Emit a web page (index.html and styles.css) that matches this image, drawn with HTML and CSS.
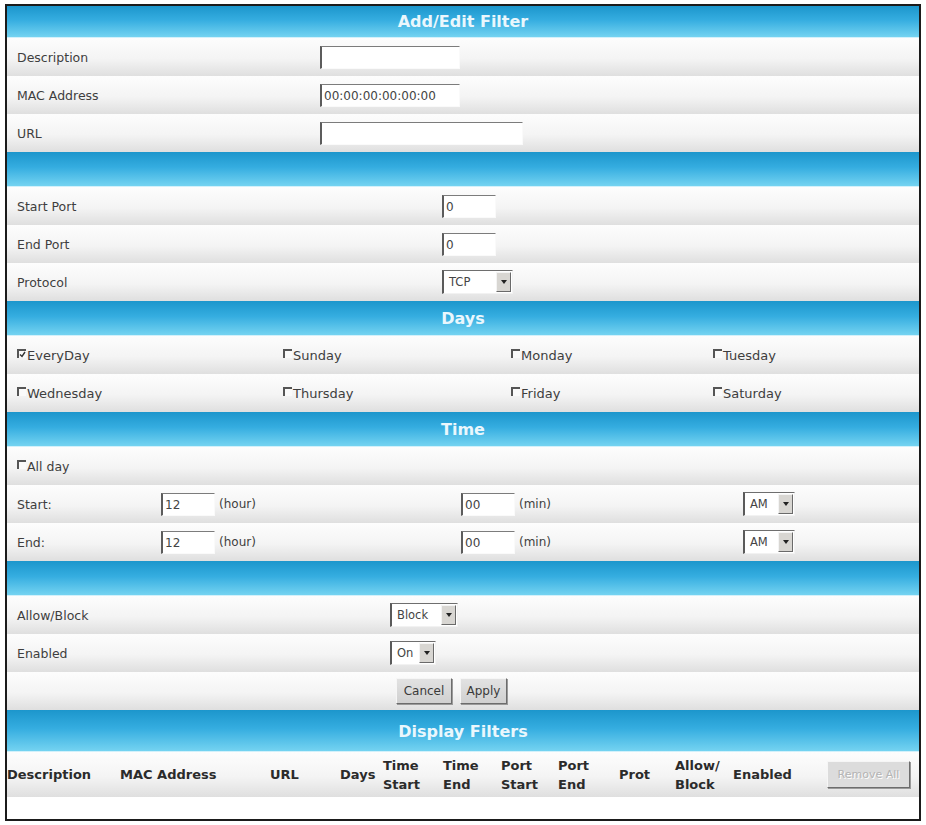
FILE: index.html
```html
<!DOCTYPE html>
<html lang="en">
<head>
  <meta charset="UTF-8">
  <title>Add/Edit Filter</title>
  <link rel="stylesheet" href="styles.css">
</head>
<body>
  <div class="panel">
    <div class="bar first">Add/Edit Filter</div>
    <div class="row cols-addr"><span>Description</span><input class="txt w140" type="text" value=""></div>
    <div class="row cols-addr"><span>MAC Address</span><input class="txt w140" type="text" value="00:00:00:00:00:00"></div>
    <div class="row cols-addr"><span>URL</span><input class="txt w203" type="text" value=""></div>

    <div class="bar"></div>
    <div class="row cols-port"><span>Start Port</span><input class="txt w54" type="text" value="0"></div>
    <div class="row cols-port"><span>End Port</span><input class="txt w54" type="text" value="0"></div>
    <div class="row cols-port"><span>Protocol</span>
      <span class="sel w71"><span class="val">TCP</span><span class="arr"></span></span>
    </div>

    <div class="bar">Days</div>
    <div class="row cols-days">
      <label class="chk"><span class="cb on"><svg width="7" height="7" viewBox="0 0 7 7"><path d="M1 3.5 L3 5.5 L6 1" fill="none" stroke="#333" stroke-width="1.4"/></svg></span>EveryDay</label>
      <label class="chk"><span class="cb"></span>Sunday</label>
      <label class="chk"><span class="cb"></span>Monday</label>
      <label class="chk"><span class="cb"></span>Tuesday</label>
    </div>
    <div class="row cols-days">
      <label class="chk"><span class="cb"></span>Wednesday</label>
      <label class="chk"><span class="cb"></span>Thursday</label>
      <label class="chk"><span class="cb"></span>Friday</label>
      <label class="chk"><span class="cb"></span>Saturday</label>
    </div>

    <div class="bar">Time</div>
    <div class="row"><label class="chk"><span class="cb"></span>All day</label></div>
    <div class="row cols-time">
      <span>Start:</span>
      <span class="grp"><input class="txt w54" type="text" value="12">(hour)</span>
      <span class="grp"><input class="txt w54" type="text" value="00">(min)</span>
      <span class="sel w52"><span class="val">AM</span><span class="arr"></span></span>
    </div>
    <div class="row cols-time">
      <span>End:</span>
      <span class="grp"><input class="txt w54" type="text" value="12">(hour)</span>
      <span class="grp"><input class="txt w54" type="text" value="00">(min)</span>
      <span class="sel w52"><span class="val">AM</span><span class="arr"></span></span>
    </div>

    <div class="bar"></div>
    <div class="row cols-rule"><span>Allow/Block</span>
      <span class="sel w68"><span class="val">Block</span><span class="arr"></span></span>
    </div>
    <div class="row cols-rule"><span>Enabled</span>
      <span class="sel w46"><span class="val">On</span><span class="arr"></span></span>
    </div>
    <div class="row actions">
      <button class="btn w56">Cancel</button>
      <button class="btn w47">Apply</button>
    </div>

    <div class="bar big">Display Filters</div>
    <div class="row list-head">
      <span>Description</span>
      <span>MAC Address</span>
      <span>URL</span>
      <span>Days</span>
      <span>Time<br>Start</span>
      <span>Time<br>End</span>
      <span>Port<br>Start</span>
      <span>Port<br>End</span>
      <span>Prot</span>
      <span>Allow/<br>Block</span>
      <span>Enabled</span>
      <span><button class="btn remove" disabled>Remove All</button></span>
    </div>
    <div class="empty"></div>
  </div>
</body>
</html>
```

FILE: styles.css
```css
* {
  box-sizing: border-box;
}
body {
  margin: 0;
  background: #fff;
  font-family: "DejaVu Sans", Verdana, sans-serif;
  color: #3e3e3e;
}
.panel {
  width: 916px;
  margin: 4px 0 0 5px;
  border: 2px solid #1b1b1b;
}

/* blue section bars */
.bar {
  height: 35px;
  display: flex;
  align-items: center;
  justify-content: center;
  background: linear-gradient(#1c96cc, #35ade0 45%, #74d3f1);
  border-bottom: 1px solid #d2f1fb;
  color: #eaf7fd;
  font-size: 16px;
  font-weight: bold;
}
.bar.first {
  height: 32px;
}
.bar.big {
  height: 42px;
  padding-top: 2px;
}

/* grey form rows */
.row {
  height: 38px;
  display: grid;
  align-items: center;
  padding-left: 10px;
  font-size: 12.5px;
  background: linear-gradient(#fdfdfd, #f4f4f4 55%, #dfdfdf);
}
.cols-addr {
  grid-template-columns: 303px auto;
}
.cols-port {
  grid-template-columns: 425px auto;
}
.cols-days {
  grid-template-columns: 266px 228px 202px auto;
  font-size: 13px;
}
.cols-time {
  grid-template-columns: 144px 300px 282px auto;
}
.cols-rule {
  grid-template-columns: 373px auto;
}
.actions {
  display: flex;
  gap: 8px;
  padding-left: 389px;
  height: 38px;
}

.grp {
  display: flex;
  align-items: center;
  gap: 4px;
  font-size: 12px;
}

/* text inputs */
.txt {
  height: 23px;
  padding: 1px 2px 0;
  font-family: "DejaVu Sans", Verdana, sans-serif;
  font-size: 12px;
  color: #444;
  background: #fff;
  border: 1px solid #fafafa;
  border-top-color: #7c7c7c;
  border-left: 2px solid #5c5c5c;
  outline: none;
}
.w140 { width: 140px; }
.w203 { width: 203px; }
.w54 { width: 54px; }

/* fake drop-down lists */
.sel {
  height: 24px;
  display: flex;
  align-items: stretch;
  background: #fff;
  border: 1px solid #f2f2f2;
  border-top-color: #6e6e6e;
  border-left: 2px solid #5a5a5a;
  font-size: 11.5px;
  color: #444;
}
.sel .val {
  flex: 1;
  display: flex;
  align-items: center;
  padding-left: 5px;
}
.sel .arr {
  width: 15px;
  margin: 1px 1px 1px 0;
  background: #d8d6d2;
  border: 1px solid;
  border-color: #f4f4f4 #6a6a6a #6a6a6a #f4f4f4;
  position: relative;
}
.sel .arr::after {
  content: "";
  position: absolute;
  left: 4px;
  top: 7px;
  border-left: 3px solid transparent;
  border-right: 3px solid transparent;
  border-top: 4px solid #222;
}
.w71 { width: 71px; }
.w52 { width: 52px; }
.w68 { width: 68px; }
.w46 { width: 46px; }

/* checkboxes */
.chk {
  display: flex;
  align-items: center;
  gap: 1px;
}
.cb {
  width: 9px;
  height: 9px;
  margin-top: -3px;
  display: inline-flex;
  align-items: center;
  justify-content: center;
  background: #fafafa;
  border-top: 2px solid #555;
  border-left: 2px solid #555;
}

/* buttons */
.btn {
  height: 26px;
  padding: 0;
  font-family: "DejaVu Sans", Verdana, sans-serif;
  font-size: 12px;
  color: #3a3a3a;
  background: linear-gradient(#e2e2e2, #d0d0d0);
  border: 1px solid;
  border-color: #f6f6f6 #6c6c6c #6c6c6c #f6f6f6;
  box-shadow: 1px 1px 0 #9a9a9a;
}
.w56 { width: 56px; }
.w47 { width: 47px; }
.btn.remove {
  width: 83px;
  height: 27px;
  font-size: 11px;
  color: #b4b4b4;
  text-shadow: 1px 1px 0 #fff;
  background: #dcdcdc;
}

/* filter list */
.list-head {
  height: 45px;
  padding-left: 0;
  grid-template-columns: 113px 150px 70px 43px 60px 58px 57px 61px 56px 58px 94px auto;
  font-size: 13px;
  font-weight: bold;
  line-height: 19px;
  color: #2b2b2b;
}
.empty {
  height: 22px;
  background: #fff;
}
```
